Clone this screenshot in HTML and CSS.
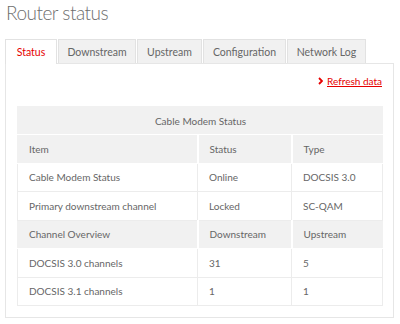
FILE: index.html
```html
<!DOCTYPE html>
<html>
<head>
	<meta charset="utf-8">
	<title>Router status</title>
	<link rel="stylesheet" href="styles.css">
</head>
<body>
	<h1 class="page-title">Router status</h1>
	<ul class="tabs">
		<li class="tab tab-active">Status</li>
		<li class="tab">Downstream</li>
		<li class="tab">Upstream</li>
		<li class="tab">Configuration</li>
		<li class="tab">Network Log</li>
	</ul>
	<div class="panel">
		<div class="refresh-wrap">
			<a class="refresh" href="#">
				<svg class="refresh-arrow" width="5" height="8" viewBox="0 0 5 8"><polyline points="1,1 4,4 1,7" fill="none" stroke="#e60000" stroke-width="1.8"/></svg>
				<span class="refresh-text">Refresh data</span>
			</a>
		</div>
		<table class="status-table">
			<tr class="row-head">
				<th colspan="3" class="cell-center">Cable Modem Status</th>
			</tr>
			<tr class="row-head">
				<th class="col-item">Item</th>
				<th class="col-status">Status</th>
				<th>Type</th>
			</tr>
			<tr>
				<td>Cable Modem Status</td>
				<td>Online</td>
				<td>DOCSIS 3.0</td>
			</tr>
			<tr>
				<td>Primary downstream channel</td>
				<td>Locked</td>
				<td>SC-QAM</td>
			</tr>
			<tr class="row-head">
				<th>Channel Overview</th>
				<th>Downstream</th>
				<th>Upstream</th>
			</tr>
			<tr>
				<td>DOCSIS 3.0 channels</td>
				<td>31</td>
				<td>5</td>
			</tr>
			<tr>
				<td>DOCSIS 3.1 channels</td>
				<td>1</td>
				<td>1</td>
			</tr>
		</table>
	</div>
</body>
</html>
```

FILE: styles.css
```css
* {
	margin: 0;
	padding: 0;
	box-sizing: border-box;
}
body {
	font-family: 'Lato', 'Open Sans', Arial, sans-serif;
	background-color: #ffffff;
	color: #555555;
	padding: 0 6px 0 5px;
}
.page-title {
	font-size: 19px;
	font-weight: 300;
	line-height: 24px;
	color: #6e6e6e;
	padding: 1px 0 0 1px;
	letter-spacing: -0.5px;
}
.tabs {
	display: flex;
	gap: 1px;
	margin-top: 14px;
	list-style: none;
}
.tab {
	height: 24px;
	line-height: 24px;
	text-align: center;
	white-space: nowrap;
	font-size: 10.5px;
	color: #666666;
	background-color: #f1f1f1;
	border: 1px solid #e2e2e2;
	border-bottom: none;
}
.tab-active {
	background-color: #ffffff;
	color: #e60000;
	height: 25px;
	margin-bottom: -1px;
	width: 52px;
}
.tab:nth-child(2) { width: 78px; }
.tab:nth-child(3) { width: 65px; }
.tab:nth-child(4) { width: 83px; }
.tab:nth-child(5) { width: 79px; }
.panel {
	border: 1px solid #e6e6e6;
	height: 255px;
	padding: 0 11px 0 11px;
}
.refresh-wrap {
	display: flex;
	justify-content: flex-end;
	padding-top: 9px;
	height: 42px;
}
.refresh {
	display: flex;
	align-items: center;
	gap: 4px;
	color: #e60000;
	font-size: 10px;
	height: 16px;
	white-space: nowrap;
}
.refresh-text {
	text-decoration: underline;
}
.status-table {
	width: 366px;
	border-collapse: collapse;
	font-size: 10px;
	color: #666666;
}
.status-table th,
.status-table td {
	text-align: left;
	font-weight: 400;
	padding: 0 10px 0 11px;
	height: 28.5px;
	white-space: nowrap;
}
.status-table td {
	border: 1px solid #ececec;
}
.row-head th {
	background-color: #f1f1f1;
	border: 1px solid #ffffff;
	border-left-color: #f1f1f1;
	border-right-color: #f1f1f1;
}
.row-head th + th {
	border-left: 2px solid #ffffff;
}
.status-table .cell-center {
	text-align: center;
	height: 28px;
	border-top-color: #f1f1f1;
}
.col-item {
	width: 180px;
}
.col-status {
	width: 94px;
}
```
